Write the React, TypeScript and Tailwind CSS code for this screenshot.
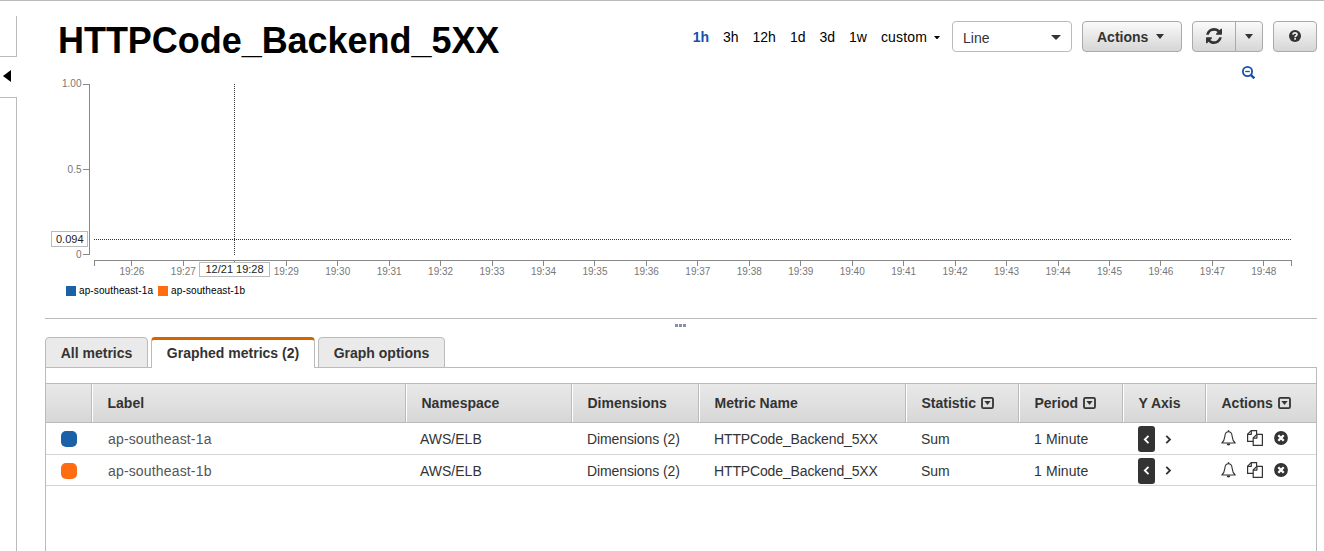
import React from "react";

const FONT = '[font-family:"Liberation_Sans",Arial,sans-serif]';

function Caret({ className = "" }: { className?: string }) {
  return (
    <svg className={className} viewBox="0 0 10 5" preserveAspectRatio="none" fill="currentColor">
      <path d="M0 0H10L5 5Z" />
    </svg>
  );
}

function RefreshIcon() {
  return (
    <svg className="-mt-px h-4 w-4" viewBox="0 0 1536 1536" fill="currentColor">
      <path d="M1511 928q0 5-1 7-64 268-268 434.5t-478 166.5q-146 0-282.5-55t-243.5-157l-129 129q-19 19-45 19t-45-19-19-45v-448q0-26 19-45t45-19h448q26 0 45 19t19 45-19 45l-137 137q71 66 161 102t187 36q134 0 250-65t186-179q11-17 53-117 8-23 30-23h192q13 0 22.5 9.5t9.5 22.5zm25-800v448q0 26-19 45t-45 19h-448q-26 0-45-19t-19-45 19-45l138-138q-148-137-349-137-134 0-250 65t-186 179q-11 17-53 117-8 23-30 23h-199q-13 0-22.5-9.5t-9.5-22.5v-7q65-268 270-434.5t480-166.5q146 0 284 55.5t245 156.5l130-129q19-19 45-19t45 19 19 45z" />
    </svg>
  );
}

function HelpIcon() {
  return (
    <svg className="-mt-px h-3 w-3" viewBox="0 0 12 12">
      <circle cx="6" cy="6" r="6" fill="#333" />
      <path d="M3.9 4.6C4.1 2.2 8 2.2 8 4.5C8 5.8 6.1 5.8 6.1 7.2" fill="none" stroke="#eee" strokeWidth="1.7" />
      <rect x="5.2" y="8.1" width="1.8" height="1.6" fill="#eee" />
    </svg>
  );
}

function ZoomOutIcon() {
  return (
    <svg className="h-[13px] w-[13px]" viewBox="0 0 13 13" fill="none" stroke="#1350b0">
      <circle cx="5.5" cy="5.5" r="4.6" strokeWidth="1.8" />
      <path d="M8.8 8.8L12.3 12.3" strokeWidth="2.4" />
      <path d="M3.2 5.5H7.8" strokeWidth="1.3" />
    </svg>
  );
}

function BellIcon() {
  return (
    <svg className="h-4 w-[15px]" viewBox="0 0 15 16" fill="none" stroke="#333">
      <path d="M7.5 1.8C4.9 1.8 4 4 3.8 6.6C3.5 9.7 2.6 11.4 .8 13H14.2C12.4 11.4 11.5 9.7 11.2 6.6C11 4 10.1 1.8 7.5 1.8Z" strokeWidth="1.1" strokeLinejoin="round" />
      <path d="M7.5 .2V2" strokeWidth="1.4" />
      <path d="M5.6 13.6A1.9 1.9 0 0 0 9.4 13.6Z" fill="#333" stroke="none" />
    </svg>
  );
}

function CopyIcon() {
  return (
    <svg className="h-4 w-4" viewBox="0 0 16 16" fill="none" stroke="#333" strokeWidth="1.2" strokeLinejoin="round">
      <path d="M6.2 11.4H.6V4.2L4.2 .6H9.6V4.3" />
      <path d="M4.3 .6V4.3H.6" />
      <path d="M6.2 8L9.8 4.4H15.4V15.4H6.2Z" />
      <path d="M9.9 4.4V8.1H6.2" />
    </svg>
  );
}

function RemoveIcon() {
  return (
    <svg className="h-[14px] w-[14px]" viewBox="0 0 14 14">
      <circle cx="7" cy="7" r="6.9" fill="#333" />
      <path d="M4.3 4.3L9.7 9.7M9.7 4.3L4.3 9.7" stroke="#fff" strokeWidth="2.3" />
    </svg>
  );
}

function MenuBox() {
  return (
    <svg className="ml-[5px] h-3 w-[13px]" viewBox="0 0 13 12">
      <rect x="1" y=".9" width="11" height="10.2" rx="1.4" fill="none" stroke="#333" strokeWidth="1.8" />
      <path d="M3.4 4H9.6L6.5 8Z" fill="#333" />
    </svg>
  );
}

function Chevron({ d, color }: { d: string; color: string }) {
  return (
    <svg className="h-[9px] w-[7px]" viewBox="0 0 7 9" fill="none" stroke={color} strokeWidth="1.8">
      <path d={d} />
    </svg>
  );
}

const minutes = Array.from({ length: 23 }, (_, i) => 26 + i);

function Chart() {
  return (
    <svg className="block h-[200px] w-[1272px] overflow-visible" viewBox="45 80 1272 200">
      <g stroke="#888" fill="none" shapeRendering="crispEdges">
        <path d="M83 84.5H89.5V254.5H83M83 169.5H89" />
        <path d="M94.5 266V260.5H1291.5V266" />
        {minutes.map((m, i) => (
          <path key={m} d={`M${Math.floor(131.9 + i * 51.45) + 0.5} 260V266`} />
        ))}
      </g>
      <g fill="#777" fontSize="10" textAnchor="end">
        <text x="81.5" y="87">1.00</text>
        <text x="81.5" y="173">0.5</text>
        <text x="81.5" y="258">0</text>
      </g>
      <g fill="#777" fontSize="10" textAnchor="middle">
        {minutes.map((m, i) =>
          m === 28 ? null : (
            <text key={m} x={131.9 + i * 51.45} y="275">{`19:${m}`}</text>
          ),
        )}
      </g>
      <g stroke="#333" strokeDasharray="1 1" shapeRendering="crispEdges">
        <path d="M234.5 84V255" />
        <path d="M94 239.5H1291" />
      </g>
      <g fill="#fff" stroke="#bbb" shapeRendering="crispEdges">
        <rect x="51.5" y="231.5" width="36" height="15" />
        <rect x="199.5" y="262.5" width="70" height="14" />
      </g>
      <g fill="#222" fontSize="11">
        <text x="56" y="243">0.094</text>
        <text x="205.5" y="273">12/21 19:28</text>
      </g>
    </svg>
  );
}

const headers: { name: string; width: string; menu?: boolean }[] = [
  { name: "", width: "w-[46px]" },
  { name: "Label", width: "w-[314px]" },
  { name: "Namespace", width: "w-[166px]" },
  { name: "Dimensions", width: "w-[127px]" },
  { name: "Metric Name", width: "w-[207px]" },
  { name: "Statistic", width: "w-[113px]", menu: true },
  { name: "Period", width: "w-[104px]", menu: true },
  { name: "Y Axis", width: "w-[83px]" },
  { name: "Actions", width: "w-[110px]", menu: true },
];

function Row({ label, swatch, height }: { label: string; swatch: string; height: string }) {
  return (
    <div className={`flex items-center border-b border-[#d5d5d5] pt-px ${height}`}>
      <div className="w-[46px] pl-[15px]">
        <div className={`h-4 w-4 rounded-[5px] ${swatch}`} />
      </div>
      <div className="w-[314px] pl-4 tracking-[0.16px] text-[#555]">{label}</div>
      <div className="w-[166px] pl-[14px]">AWS/ELB</div>
      <div className="w-[127px] pl-[15px] tracking-[-0.1px]">Dimensions (2)</div>
      <div className="w-[207px] pl-[15px] tracking-[-0.14px]">HTTPCode_Backend_5XX</div>
      <div className="w-[113px] pl-[15px]">Sum</div>
      <div className="w-[104px] pl-[15px] tracking-[0.1px]">1 Minute</div>
      <div className="flex w-[83px] items-center pl-[15px]">
        <div className="flex h-[26px] w-[17px] items-center justify-center rounded-[3px] bg-[#333]">
          <Chevron d="M5.5 .8L1.8 4.5L5.5 8.2" color="#fff" />
        </div>
        <div className="ml-[10px]">
          <Chevron d="M1.3 .8L5 4.5L1.3 8.2" color="#333" />
        </div>
      </div>
      <div className="flex w-[110px] items-center pb-[2px] pl-[15px]">
        <BellIcon />
        <span className="ml-[11px]"><CopyIcon /></span>
        <span className="ml-[11px]"><RemoveIcon /></span>
      </div>
    </div>
  );
}

const button = "flex h-[31px] items-center border border-[#aaa] bg-linear-to-b from-[#fafafa] to-[#d6d6d6] text-[#333]";

export default function App() {
  return (
    <div className={`flex h-[551px] w-[1324px] overflow-hidden border-t border-[#bbb] bg-white text-sm leading-4 text-[#333] ${FONT}`}>
      <aside className="flex w-[17px] flex-col pt-[15px]">
        <div className="h-[41px] border-r border-b border-[#bbb]" />
        <div className="flex h-10 items-center pb-[2px] pl-[3px] text-black">
          <svg className="h-3 w-2" viewBox="0 0 8 12"><path d="M8 0V12L0 6Z" /></svg>
        </div>
        <div className="flex-1 border-t border-r border-[#bbb]" />
      </aside>

      <main className="ml-7 flex w-[1272px] flex-col">
        <header className="flex h-[59px] justify-between pl-[13px]">
          <h1 className="pt-5 text-[36px] leading-10 font-bold tracking-[-0.04px] text-black">HTTPCode_Backend_5XX</h1>
          <div className="mt-5 flex h-[31px] items-center self-start">
            <nav className="mr-3 flex items-center gap-[14px] text-black">
              <b className="text-[#1350b0]">1h</b>
              <span>3h</span>
              <span>12h</span>
              <span>1d</span>
              <span>3d</span>
              <span>1w</span>
              <span className="flex items-center">
                <span className="tracking-[0.15px]">custom</span>
                <Caret className="mt-[2px] ml-[7px] h-[3.5px] w-[6px]" />
              </span>
            </nav>
            <div className="flex h-[31px] w-[120px] items-center justify-between rounded-[4px] border border-[#bbb] pr-[10px] pl-[10px]">
              <span className="pt-[2px]">Line</span>
              <Caret className="mt-px h-[5px] w-[10px]" />
            </div>
            <div className={`ml-[10px] w-[100px] rounded-[4px] pl-[14px] font-bold ${button}`}>
              Actions
              <Caret className="ml-2 h-[5px] w-2" />
            </div>
            <div className={`ml-[10px] w-[71px] rounded-[4px] ${button}`}>
              <div className="flex h-full w-[43px] items-center justify-center border-r border-[#aaa]"><RefreshIcon /></div>
              <div className="flex flex-1 justify-center"><Caret className="-mt-px h-[5px] w-2" /></div>
            </div>
            <div className={`ml-[10px] w-11 justify-center rounded-[4px] ${button}`}><HelpIcon /></div>
          </div>
        </header>

        <div className="flex h-5 items-center justify-end pt-[5px] pr-[62.5px]"><ZoomOutIcon /></div>
        <Chart />
        <div className="flex h-[39px] items-start gap-[5px] border-b border-[#bbb] pt-[5px] pl-[21px] text-[10px] leading-[11px] tracking-[0.12px] text-black">
          <span className="flex items-center gap-[3px]"><i className="h-[10px] w-[10px] bg-[#1c61a7]" />ap-southeast-1a</span>
          <span className="flex items-center gap-[3px]"><i className="h-[10px] w-[10px] bg-[#ff6c11]" />ap-southeast-1b</span>
        </div>

        <div className="flex h-[18px] justify-center gap-px pt-[5px] pr-px">
          <i className="h-[3px] w-[3px] bg-[#8592a6]" />
          <i className="h-[3px] w-[3px] bg-[#8592a6]" />
          <i className="h-[3px] w-[3px] bg-[#8592a6]" />
        </div>

        <div className="z-10 flex h-[31px] gap-[3px] font-bold">
          <div className="flex h-[31px] w-[103px] items-center justify-center rounded-t-[4px] border border-[#bbb] bg-[#eaeaea] pt-px">All metrics</div>
          <div className="flex h-[31px] w-[164px] items-center justify-center rounded-t-[4px] border-x border-t-[3px] border-x-[#bbb] border-t-[#d86400] bg-white pb-[3px]">Graphed metrics (2)</div>
          <div className="flex h-[31px] w-[127px] items-center justify-center rounded-t-[4px] border border-[#bbb] bg-[#eaeaea] pt-px">Graph options</div>
        </div>
        <section className="-mt-px flex-1 border border-b-0 border-[#bbb] pt-[15px]">
          <div className="flex h-[40px] border-y border-[#bbb] bg-linear-to-b from-[#e9e9e9] to-[#d7d7d7] font-bold">
            {headers.map((h, i) => (
              <div
                key={i}
                className={`flex shrink-0 items-center pl-[15.5px] ${h.width} ${i < headers.length - 1 ? "border-r border-[#bbb]" : ""} ${i > 0 ? "shadow-[inset_1px_0_0_#fff]" : ""}`}
              >
                {h.name}
                {h.menu && <MenuBox />}
              </div>
            ))}
          </div>
          <Row label="ap-southeast-1a" swatch="bg-[#1c61a7]" height="h-8" />
          <Row label="ap-southeast-1b" swatch="bg-[#ff6c11]" height="h-[31px]" />
        </section>
      </main>
    </div>
  );
}
